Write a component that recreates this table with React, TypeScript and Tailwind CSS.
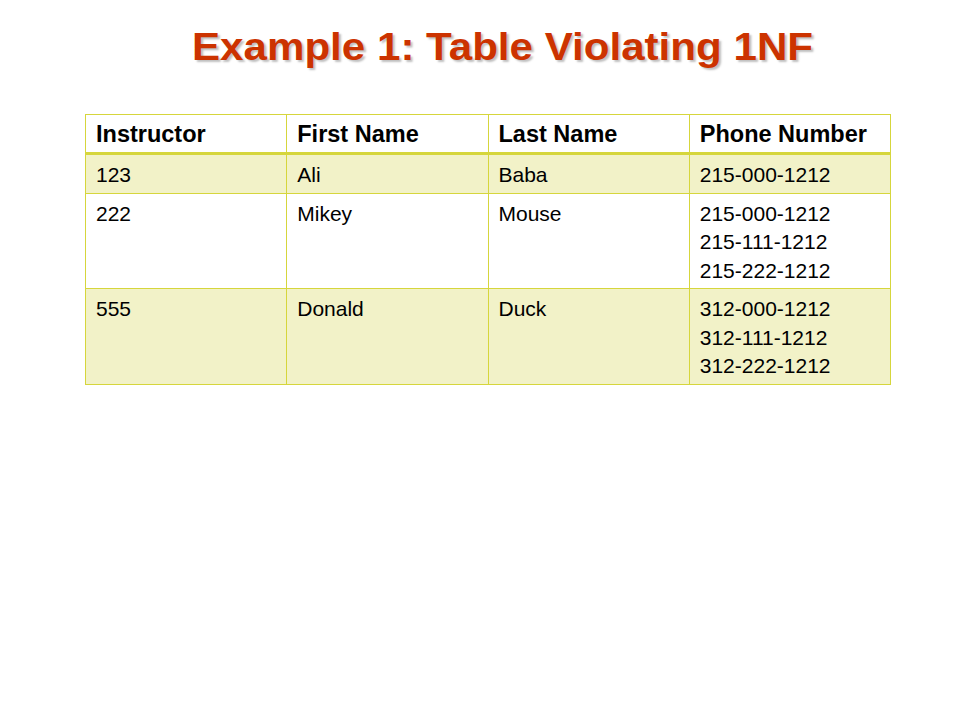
import React from "react";

const rows = [
  { id: "123", first: "Ali", last: "Baba", phones: ["215-000-1212"], fill: true },
  { id: "222", first: "Mikey", last: "Mouse", phones: ["215-000-1212", "215-111-1212", "215-222-1212"], fill: false },
  { id: "555", first: "Donald", last: "Duck", phones: ["312-000-1212", "312-111-1212", "312-222-1212"], fill: true },
];

export default function App() {
  return (
    <div className="w-[960px] h-[720px] bg-white relative" style={{ fontFamily: '"Liberation Sans", Arial, sans-serif' }}>
      <div className="pt-[24px] pl-[192px]">
        <h1 className="inline-block origin-left scale-x-[1.08] text-[39px] leading-[45px] font-bold text-[#cc3300] [text-shadow:2px_2px_2px_rgba(0,0,0,0.25)]">
          Example 1: Table Violating 1NF
        </h1>
      </div>
      <div className="ml-[85px] mt-[45px] w-[806px]">
        <table className="w-full border-collapse table-fixed text-[21px] text-black">
          <thead>
            <tr>
              {["Instructor", "First Name", "Last Name", "Phone Number"].map((h) => (
                <th key={h} className="h-[39px] border border-[#d6d63c] border-b-[3px] text-left font-bold text-[23.5px] leading-[28px] px-[10px] pt-[4px] pb-[4px] align-middle bg-white">
                  {h}
                </th>
              ))}
            </tr>
          </thead>
          <tbody>
            {rows.map((r) => (
              <tr key={r.id} className={r.fill ? "bg-[#f2f2c8]" : "bg-white"}>
                <td className="border border-[#d6d63c] px-[10px] pt-[6px] pb-[3px] align-top leading-[28.5px]">{r.id}</td>
                <td className="border border-[#d6d63c] px-[10px] pt-[6px] pb-[3px] align-top leading-[28.5px]">{r.first}</td>
                <td className="border border-[#d6d63c] px-[10px] pt-[6px] pb-[3px] align-top leading-[28.5px]">{r.last}</td>
                <td className="border border-[#d6d63c] px-[10px] pt-[6px] pb-[3px] align-top leading-[28.5px]">
                  {r.phones.map((p) => (
                    <div key={p}>{p}</div>
                  ))}
                </td>
              </tr>
            ))}
          </tbody>
        </table>
      </div>
    </div>
  );
}
